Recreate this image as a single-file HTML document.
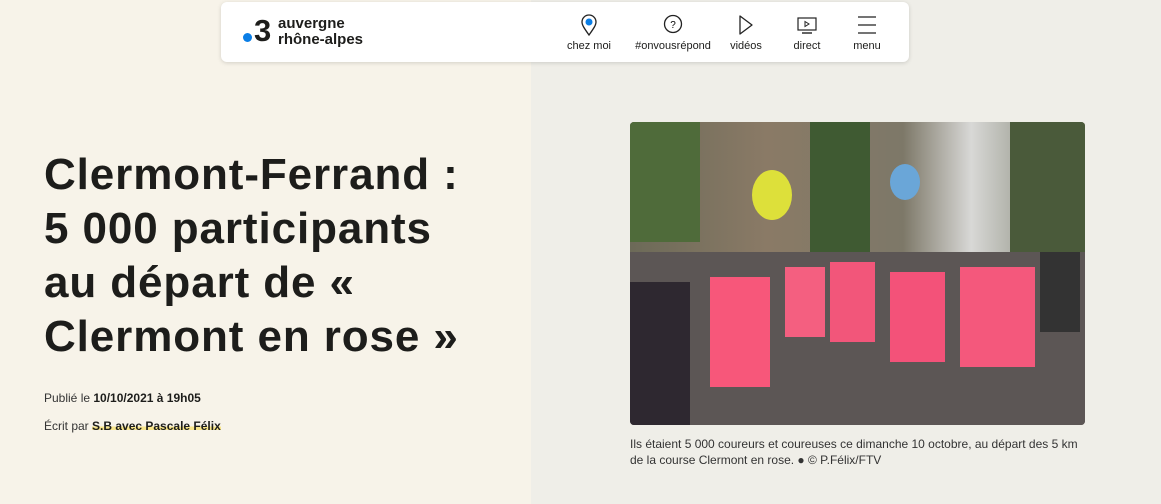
<!DOCTYPE html>
<html><head><meta charset="utf-8"><style>
*{margin:0;padding:0;box-sizing:border-box}
body{width:1161px;height:504px;overflow:hidden;font-family:"Liberation Sans",sans-serif;background:#f7f3e9;position:relative;color:#1d1d1b}
.right{position:absolute;left:531px;top:0;width:630px;height:504px;background:#efeee8}
.nav{position:absolute;left:221px;top:2px;width:688px;height:60px;background:#fff;border-radius:6px;box-shadow:0 1px 4px rgba(0,0,0,.15)}
.dot{position:absolute;left:22px;top:31px;width:9px;height:9px;border-radius:50%;background:#0a7ee6}
.three{position:absolute;left:33px;top:13px;font-size:31px;font-weight:bold;line-height:32px}
.ltxt{position:absolute;left:57px;top:14px;font-size:15px;font-weight:bold;line-height:16px}
.it{position:absolute;top:12px;text-align:center;font-size:11px;white-space:nowrap}
.it svg{display:block;margin:0 auto 4px}
h1{position:absolute;left:44px;top:148px;font-size:44px;line-height:54px;font-weight:bold;letter-spacing:0.9px}
.meta{position:absolute;left:44px;font-size:12px;color:#333}
.meta b{color:#1d1d1b}
.hl{background:linear-gradient(transparent 55%,#f8e58a 55%,#f8e58a 80%,transparent 80%)}
.img{position:absolute;left:630px;top:122px;width:455px;height:303px;border-radius:4px;overflow:hidden;background:#5c5655}
.cap{position:absolute;left:630px;top:436px;width:452px;font-size:12px;line-height:16px;color:#333}
</style></head><body>
<div class="right"></div>
<div class="nav">
<div class="dot"></div><div class="three">3</div>
<div class="ltxt">auvergne<br>rhône-alpes</div>
<div class="it" style="left:343px;width:50px"><svg width="18" height="22" viewBox="0 0 18 22"><path d="M9 21C4 14 2 11 2 8a7 7 0 0114 0c0 3-2 6-7 13z" fill="none" stroke="#222" stroke-width="1.3"/><circle cx="9" cy="8" r="3.5" fill="#0a7ee6"/></svg>chez moi</div>
<div class="it" style="left:409px;width:86px"><svg width="22" height="22" viewBox="0 0 22 22"><circle cx="11" cy="10" r="8.5" fill="none" stroke="#222" stroke-width="1.3"/><text x="11" y="14" font-size="10" text-anchor="middle" font-family="Liberation Sans">?</text></svg>#onvousrépond</div>
<div class="it" style="left:505px;width:40px"><svg width="18" height="22" viewBox="0 0 18 22"><path d="M3 2l12 9-12 9z" fill="none" stroke="#222" stroke-width="1.3" stroke-linejoin="round"/></svg>vidéos</div>
<div class="it" style="left:566px;width:40px"><svg width="22" height="22" viewBox="0 0 22 22"><rect x="2" y="4" width="18" height="12" fill="none" stroke="#222" stroke-width="1.2"/><path d="M9 7.5l4 2.5-4 2.5z" fill="none" stroke="#222"/><path d="M6 19h10" stroke="#222" stroke-width="1.4"/></svg>direct</div>
<div class="it" style="left:626px;width:40px"><svg width="22" height="22" viewBox="0 0 22 22"><path d="M2 3h18M2 11h18M2 19h18" stroke="#222" stroke-width="1.3"/></svg>menu</div>
</div>
<h1>Clermont-Ferrand :<br>5 000 participants<br>au départ de «<br>Clermont en rose »</h1>
<div class="meta" style="top:391px">Publié le <b>10/10/2021 à 19h05</b></div>
<div class="meta" style="top:419px">Écrit par <b class="hl">S.B avec Pascale Félix</b></div>
<div class="img">
<div style="position:absolute;left:0;top:0;width:455px;height:140px;background:linear-gradient(90deg,#6c6a58,#8a7a66 30%,#7d7868 60%,#d8d8d6 75%,#6a6e5a)"></div>
<div style="position:absolute;left:0;top:0;width:70px;height:120px;background:#4f6b3a"></div>
<div style="position:absolute;left:180px;top:0;width:60px;height:130px;background:#3f5a32"></div>
<div style="position:absolute;left:380px;top:0;width:75px;height:140px;background:#4a5a3a"></div>
<div style="position:absolute;left:122px;top:48px;width:40px;height:50px;border-radius:50%;background:#dde03a"></div>
<div style="position:absolute;left:260px;top:42px;width:30px;height:36px;border-radius:50%;background:#6aa6d8"></div>
<div style="position:absolute;left:0;top:130px;width:455px;height:173px;background:#5c5655"></div>
<div style="position:absolute;left:80px;top:155px;width:60px;height:110px;background:#f7577a"></div>
<div style="position:absolute;left:155px;top:145px;width:40px;height:70px;background:#f45f80"></div>
<div style="position:absolute;left:200px;top:140px;width:45px;height:80px;background:#f2567a"></div>
<div style="position:absolute;left:260px;top:150px;width:55px;height:90px;background:#f35279"></div>
<div style="position:absolute;left:330px;top:145px;width:75px;height:100px;background:#f4587c"></div>
<div style="position:absolute;left:0;top:160px;width:60px;height:143px;background:#2e2830"></div>
<div style="position:absolute;left:410px;top:130px;width:40px;height:80px;background:#333"></div>
</div>
<div class="cap">Ils étaient 5 000 coureurs et coureuses ce dimanche 10 octobre, au départ des 5 km de la course Clermont en rose. ● © P.Félix/FTV</div>
</body></html>
